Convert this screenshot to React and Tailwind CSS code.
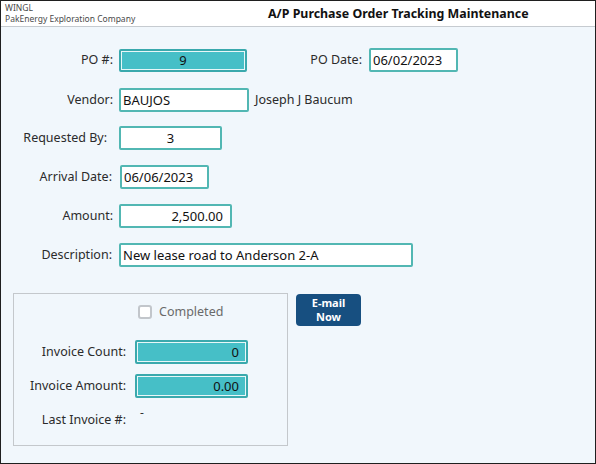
import React from "react";

const font = { fontFamily: '"Noto Sans", "Open Sans", sans-serif' };

function Label({ children, w = "w-[112px]" }) {
  return (
    <div className={`${w} shrink-0 text-right text-[12.5px] text-[#2b2b2b] leading-none`}>
      {children}
    </div>
  );
}

function Field({ value, w, align = "left", teal = false, h = "h-[24px]" }) {
  const base = teal
    ? "bg-[#46bfc7] border-2 border-[#3aa9ad] shadow-[inset_0_0_0_1px_#e8f7f8]"
    : "bg-white border-2 border-[#52b7b3]";
  const al =
    align === "center" ? "justify-center" : align === "right" ? "justify-end pr-[7px]" : "justify-start pl-[2px]";
  return (
    <div className={`${w} ${h} ${base} rounded-[2px] flex items-center ${al} text-[13px] text-[#111] leading-none`}>
      {value}
    </div>
  );
}

export default function App() {
  return (
    <div style={font} className="w-[596px] h-[464px] border border-[#1f1f1f] bg-[#f1f7fc] flex flex-col overflow-hidden">
      {/* header */}
      <div className="h-[26px] shrink-0 bg-white border-b border-[#c6cbd0] flex items-center">
        <div className="pl-[4px] flex flex-col text-[8.5px] leading-[11px] text-[#4a4a4a] w-[264px] -mt-[1px]">
          <span>WINGL</span>
          <span>PakEnergy Exploration Company</span>
        </div>
        <div className="text-[12.4px] font-bold text-[#111] ml-[3px] mt-[1px]">
          A/P Purchase Order Tracking Maintenance
        </div>
      </div>

      {/* form */}
      <div className="flex flex-col pt-[21px]">
        <div className="flex items-center h-[24px]">
          <Label>PO #:</Label>
          <div className="ml-[6px] mt-[1px]">
            <Field value="9" w="w-[128px]" h="h-[23px]" align="center" teal />
          </div>
          <Label w="w-[115px]">PO Date:</Label>
          <div className="ml-[7px]">
            <Field value="06/02/2023" w="w-[89px]" />
          </div>
        </div>

        <div className="flex items-center h-[24px] mt-[16px]">
          <Label>Vendor:</Label>
          <div className="ml-[6px]">
            <Field value="BAUJOS" w="w-[130px]" />
          </div>
          <span className="ml-[6px] text-[12.5px] text-[#2b2b2b]">Joseph J Baucum</span>
        </div>

        <div className="flex items-center h-[24px] mt-[14px]">
          <Label w="w-[106px]">Requested By:</Label>
          <div className="ml-[12px]">
            <Field value="3" w="w-[103px]" align="center" />
          </div>
        </div>

        <div className="flex items-center h-[24px] mt-[15px]">
          <Label w="w-[111px]">Arrival Date:</Label>
          <div className="ml-[8px]">
            <Field value="06/06/2023" w="w-[89px]" />
          </div>
        </div>

        <div className="flex items-center h-[24px] mt-[15px]">
          <Label>Amount:</Label>
          <div className="ml-[6px]">
            <Field value="2,500.00" w="w-[113px]" align="right" />
          </div>
        </div>

        <div className="flex items-center h-[24px] mt-[15px]">
          <Label w="w-[111px]">Description:</Label>
          <div className="ml-[7px]">
            <Field value="New lease road to Anderson 2-A" w="w-[294px]" />
          </div>
        </div>

        <div className="flex items-start mt-[26px] ml-[12px]">
          <div className="w-[275px] h-[153px] border border-[#c4c8cc] flex flex-col">
            <div className="flex items-center mt-[10px] ml-[124px] h-[16px]">
              <div className="w-[14px] h-[14px] border-2 border-[#c2c6cb] rounded-[3px] bg-white" />
              <span className="ml-[7px] text-[12.5px] text-[#6a6a6a] leading-none">Completed</span>
            </div>
            <div className="flex items-center h-[24px] mt-[20px]">
              <Label w="w-[112px]">Invoice Count:</Label>
              <div className="ml-[9px]">
                <Field value="0" w="w-[113px]" align="right" teal />
              </div>
            </div>
            <div className="flex items-center h-[24px] mt-[10px]">
              <Label w="w-[112px]">Invoice Amount:</Label>
              <div className="ml-[9px]">
                <Field value="0.00" w="w-[113px]" align="right" teal />
              </div>
            </div>
            <div className="flex items-start mt-[9px]">
              <div className="pt-[7px]">
                <Label w="w-[112px]">Last Invoice #:</Label>
              </div>
              <span className="ml-[14px] text-[12px] text-[#333] leading-none">-</span>
            </div>
          </div>
          <button className="ml-[8px] mt-[1px] w-[65px] h-[32px] rounded-[4px] bg-[#174f80] text-white text-[11px] font-bold leading-[14px] flex flex-col items-center justify-center">
            <span>E-mail</span>
            <span>Now</span>
          </button>
        </div>
      </div>
    </div>
  );
}
